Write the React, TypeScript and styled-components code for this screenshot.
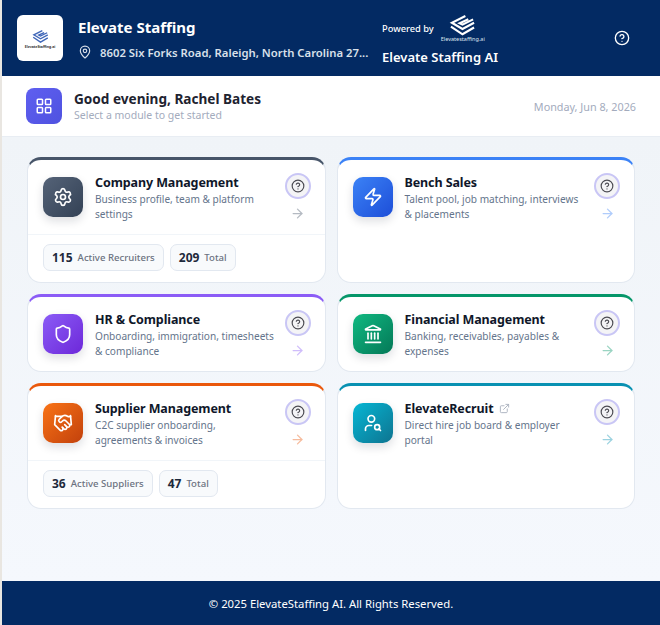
import type { ReactNode } from "react";
import styled, { createGlobalStyle } from "styled-components";
import {
  ArrowRight,
  CircleHelp,
  ExternalLink,
  Handshake,
  Landmark,
  LayoutGrid,
  MapPin,
  Settings,
  Shield,
  UserSearch,
  Zap,
} from "lucide-react";

const GlobalStyle = createGlobalStyle`
  * { box-sizing: border-box; }
  html, body { margin: 0; padding: 0; height: 100%; }
  body {
    background: #e9e6e1;
    font-family: "Noto Sans", "Open Sans", sans-serif;
    color: #0f172a;
  }
`;

const Page = styled.div`
  margin-left: 2px;
  height: 625px;
  display: flex;
  flex-direction: column;
  overflow: hidden;
  background: #fff;
`;

const Header = styled.header`
  height: 76px;
  flex: none;
  background: #032a63;
  color: #fff;
  display: flex;
  align-items: center;
  padding: 0 30px 0 15px;
`;

const LogoBox = styled.div`
  width: 46px;
  height: 46px;
  flex: none;
  border-radius: 6px;
  background: #fff;
  display: flex;
  flex-direction: column;
  align-items: center;
  justify-content: center;
  padding-top: 3px;
`;

const LogoCaption = styled.span`
  font-size: 3.5px;
  line-height: 5px;
  font-weight: 700;
  color: #333;
  white-space: nowrap;
`;

const Brand = styled.div`
  margin-left: 15px;
  width: 292px;
  flex: none;
  display: flex;
  flex-direction: column;
  gap: 6px;
`;

const BrandName = styled.div`
  font-size: 15px;
  line-height: 22px;
  font-weight: 700;
`;

const Address = styled.div`
  display: flex;
  align-items: center;
  gap: 8px;
  font-size: 11.3px;
  line-height: 17px;
  font-weight: 600;
  color: #d9e0ea;
`;

const AddressText = styled.span`
  white-space: nowrap;
`;

const Powered = styled.div`
  margin-left: 12px;
  display: flex;
  flex-direction: column;
  gap: 5px;
  padding-top: 5px;
`;

const PoweredRow = styled.div`
  display: flex;
  align-items: center;
  gap: 7px;
`;

const PoweredLabel = styled.span`
  font-size: 9.3px;
  font-weight: 500;
`;

const PoweredLogo = styled.div`
  display: flex;
  flex-direction: column;
  align-items: center;
`;

const PoweredCaption = styled.span`
  font-size: 5.5px;
  line-height: 7px;
  color: #dfe6f0;
  white-space: nowrap;
`;

const PoweredName = styled.div`
  font-size: 13px;
  line-height: 18px;
  font-weight: 600;
`;

const HeaderHelp = styled.div`
  margin-left: auto;
  display: flex;
`;

const Greeting = styled.section`
  height: 61px;
  flex: none;
  background: #fff;
  border-bottom: 1px solid #e8edf3;
  display: flex;
  align-items: center;
  padding: 0 24px;
`;

const GreetingIcon = styled.div`
  width: 36px;
  height: 36px;
  flex: none;
  border-radius: 8px;
  background: linear-gradient(135deg, #5f5ff0, #4f52e0);
  color: #fff;
  display: flex;
  align-items: center;
  justify-content: center;
`;

const GreetingText = styled.div`
  margin-left: 12px;
  margin-top: -2px;
  display: flex;
  flex-direction: column;
`;

const GreetingTitle = styled.div`
  font-size: 13.6px;
  line-height: 19px;
  font-weight: 700;
  color: #1e2330;
`;

const GreetingSub = styled.div`
  font-size: 10.5px;
  line-height: 14px;
  color: #a3abbd;
`;

const DateText = styled.div`
  margin-left: auto;
  font-size: 10.8px;
  color: #a3abbd;
`;

const Main = styled.main`
  flex: 1;
  background: linear-gradient(180deg, #f0f4f8, #f5f8fd);
  padding: 20px 25px 0 25px;
`;

const Grid = styled.div`
  display: grid;
  grid-template-columns: 1fr 1fr;
  gap: 11px;
`;

const Card = styled.article<{ $accent: string }>`
  background: #fff;
  border: 1px solid #e2e8f0;
  border-top: 3px solid ${(p) => p.$accent};
  border-radius: 14px;
  display: flex;
  flex-direction: column;
`;

const CardTop = styled.div`
  display: flex;
  align-items: flex-start;
  padding: 17px 14px 13px 15px;
`;

const CardIcon = styled.div<{ $from: string; $to: string }>`
  width: 40px;
  height: 40px;
  flex: none;
  border-radius: 10px;
  background: linear-gradient(135deg, ${(p) => p.$from}, ${(p) => p.$to});
  box-shadow: 0 4px 10px rgba(15, 23, 42, 0.14);
  color: #fff;
  display: flex;
  align-items: center;
  justify-content: center;
`;

const CardBody = styled.div`
  margin-left: 12px;
  margin-top: -3.5px;
  flex: 1;
  min-width: 0;
`;

const CardTitle = styled.h3`
  margin: 0;
  font-size: 12.5px;
  line-height: 18px;
  letter-spacing: -0.1px;
  font-weight: 700;
  color: #0f172a;
  display: flex;
  align-items: center;
  gap: 5px;
`;

const CardDesc = styled.p`
  margin: 0.5px 0 0;
  max-width: 182px;
  font-size: 10.1px;
  line-height: 14.5px;
  color: #64748b;
`;

const CardSide = styled.div<{ $accent: string }>`
  width: 26px;
  flex: none;
  margin-top: -4px;
  display: flex;
  flex-direction: column;
  align-items: center;
  gap: 7px;
  color: ${(p) => p.$accent};
`;

const HelpRing = styled.div`
  width: 26px;
  height: 26px;
  border-radius: 50%;
  border: 2.5px solid #c9c6f5;
  background: #f4f4f6;
  color: #4b4b52;
  display: flex;
  align-items: center;
  justify-content: center;
`;

const ArrowWrap = styled.div`
  display: flex;
  opacity: 0.4;
`;

const Stats = styled.div`
  border-top: 1px solid #f1f5f9;
  padding: 8.5px 15px 11.5px;
  display: flex;
  gap: 6px;
`;

const Chip = styled.div`
  height: 27px;
  display: flex;
  align-items: center;
  gap: 5px;
  padding: 0 8px;
  border-radius: 7px;
  border: 1px solid #e2e8f0;
  background: #f8fafc;
`;

const ChipValue = styled.span`
  font-size: 12px;
  font-weight: 700;
  color: #1e293b;
`;

const ChipLabel = styled.span`
  font-size: 9.6px;
  font-weight: 500;
  color: #6b7280;
`;

const Footer = styled.footer`
  height: 44px;
  flex: none;
  background: #032a63;
  color: #fff;
  display: flex;
  align-items: center;
  justify-content: center;
  padding-top: 1px;
  font-size: 11.3px;
`;

const StackMark = ({ width, color }: { width: number; color: string }) => (
  <svg width={width} viewBox="0 0 28 22" fill="none" stroke={color} strokeWidth="2.2">
    <path d="M17 1 L3 8 L14 14.5 L26 8" />
    <path d="M20 4.5 L11 8.5 L14 10 L25 4.5" />
    <path d="M2 12 L14 20 L26 13" />
  </svg>
);

type Stat = { value: number; label: string };

type Module = {
  title: string;
  desc: string;
  accent: string;
  from: string;
  to: string;
  icon: ReactNode;
  external?: boolean;
  stats?: Stat[];
};

const modules: Module[] = [
  {
    title: "Company Management",
    desc: "Business profile, team & platform settings",
    accent: "#475569",
    from: "#556378",
    to: "#334155",
    icon: <Settings size={20} />,
    stats: [
      { value: 115, label: "Active Recruiters" },
      { value: 209, label: "Total" },
    ],
  },
  {
    title: "Bench Sales",
    desc: "Talent pool, job matching, interviews & placements",
    accent: "#3b82f6",
    from: "#3b82f6",
    to: "#1d4ed8",
    icon: <Zap size={20} />,
  },
  {
    title: "HR & Compliance",
    desc: "Onboarding, immigration, timesheets & compliance",
    accent: "#8b5cf6",
    from: "#8b5cf6",
    to: "#6d28d9",
    icon: <Shield size={20} />,
  },
  {
    title: "Financial Management",
    desc: "Banking, receivables, payables & expenses",
    accent: "#059669",
    from: "#10b981",
    to: "#047857",
    icon: <Landmark size={20} />,
  },
  {
    title: "Supplier Management",
    desc: "C2C supplier onboarding, agreements\u00a0&\u00a0invoices",
    accent: "#ea580c",
    from: "#f97316",
    to: "#c2410c",
    icon: <Handshake size={20} />,
    stats: [
      { value: 36, label: "Active Suppliers" },
      { value: 47, label: "Total" },
    ],
  },
  {
    title: "ElevateRecruit",
    desc: "Direct hire job board & employer portal",
    accent: "#0891b2",
    from: "#06b6d4",
    to: "#0e7490",
    icon: <UserSearch size={20} />,
    external: true,
  },
];

export default function App() {
  return (
    <>
      <GlobalStyle />
      <Page>
        <Header>
          <LogoBox>
            <StackMark width={17} color="#3f66b8" />
            <LogoCaption>ElevateStaffing.ai</LogoCaption>
          </LogoBox>
          <Brand>
            <BrandName>Elevate Staffing</BrandName>
            <Address>
              <MapPin size={14} />
              <AddressText>8602 Six Forks Road, Raleigh, North Carolina 27...</AddressText>
            </Address>
          </Brand>
          <Powered>
            <PoweredRow>
              <PoweredLabel>Powered by</PoweredLabel>
              <PoweredLogo>
                <StackMark width={27} color="#fff" />
                <PoweredCaption>Elevatestaffing.ai</PoweredCaption>
              </PoweredLogo>
            </PoweredRow>
            <PoweredName>Elevate Staffing AI</PoweredName>
          </Powered>
          <HeaderHelp>
            <CircleHelp size={16} />
          </HeaderHelp>
        </Header>
        <Greeting>
          <GreetingIcon>
            <LayoutGrid size={18} />
          </GreetingIcon>
          <GreetingText>
            <GreetingTitle>Good evening, Rachel Bates</GreetingTitle>
            <GreetingSub>Select a module to get started</GreetingSub>
          </GreetingText>
          <DateText>Monday, Jun 8, 2026</DateText>
        </Greeting>
        <Main>
          <Grid>
            {modules.map((m) => (
              <Card key={m.title} $accent={m.accent}>
                <CardTop>
                  <CardIcon $from={m.from} $to={m.to}>
                    {m.icon}
                  </CardIcon>
                  <CardBody>
                    <CardTitle>
                      {m.title}
                      {m.external && <ExternalLink size={11} color="#a8b0bd" />}
                    </CardTitle>
                    <CardDesc>{m.desc}</CardDesc>
                  </CardBody>
                  <CardSide $accent={m.accent}>
                    <HelpRing>
                      <CircleHelp size={14} />
                    </HelpRing>
                    <ArrowWrap>
                      <ArrowRight size={15} />
                    </ArrowWrap>
                  </CardSide>
                </CardTop>
                {m.stats && (
                  <Stats>
                    {m.stats.map((s) => (
                      <Chip key={s.label}>
                        <ChipValue>{s.value}</ChipValue>
                        <ChipLabel>{s.label}</ChipLabel>
                      </Chip>
                    ))}
                  </Stats>
                )}
              </Card>
            ))}
          </Grid>
        </Main>
        <Footer>© 2025 ElevateStaffing AI. All Rights Reserved.</Footer>
      </Page>
    </>
  );
}
